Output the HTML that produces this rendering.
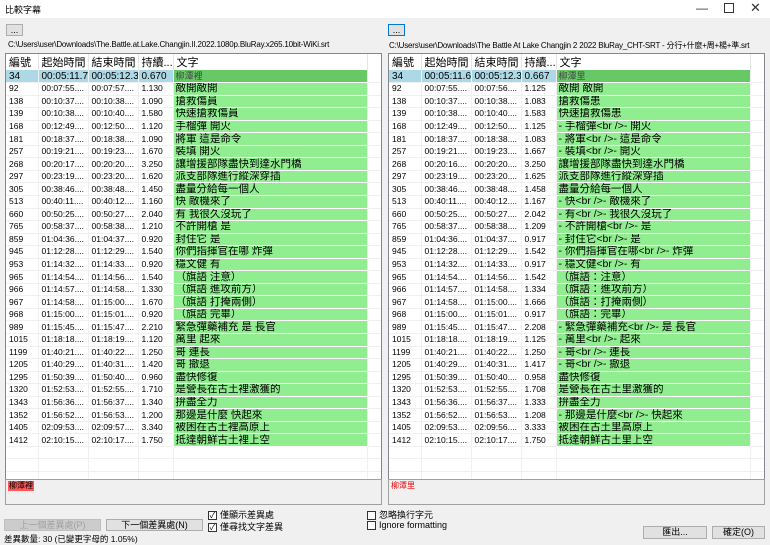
<!DOCTYPE html>
<html><head><meta charset="utf-8"><style>
*{margin:0;padding:0;box-sizing:border-box}
body{width:770px;height:544px;background:#f0f0f0;font-family:"Liberation Sans","Noto Sans CJK TC",sans-serif;font-size:9px;color:#000;position:relative;overflow:hidden}
.a{position:absolute}
.title{left:0;top:0;width:770px;height:18px;background:#fff}
.btn{background:#e1e1e1;border:1px solid #adadad;text-align:center;font-size:9px;line-height:10px}
.list{background:#fff;border:1px solid #828790;overflow:hidden}
table{border-collapse:collapse;table-layout:fixed}
td{height:12.55px;border-right:1px solid #f0f0f0;border-bottom:1px solid #f0f0f0;white-space:nowrap;overflow:hidden;padding-left:3px;font-size:8.5px;line-height:11px}
td.t{background:#90ee90;font-size:10.5px;padding-left:2px;border-bottom:1px solid #fff}
tr.sel td{background:#add8e6;font-size:10px}
tr.sel td.t{background:#66c966;color:#444;font-size:9px}
tr.sel td.g{background:#fff}
th{height:14px;font-weight:normal;text-align:left;padding-left:3px;font-size:11px;border-right:1px solid #e5e5e5;white-space:nowrap;overflow:hidden}
.tb{background:#f0f0f0;border:1px solid #a0a0a0}
.cb{width:9px;height:9px;border:1px solid #333;background:#fff;display:inline-block;vertical-align:middle;margin-right:3px;font-size:8px;line-height:7px;text-align:center}
</style></head><body>
<div class="a title"></div>
<div class="a" style="left:5px;top:3px;font-size:9px">比較字幕</div>
<div class="a" style="left:696px;top:1px;font-size:12px;color:#333">—</div>
<div class="a" style="left:724px;top:3px;width:10px;height:10px;border:1px solid #333"></div>
<div class="a" style="left:750px;top:0px;font-size:13px;color:#333">✕</div>

<div class="a btn" style="left:6px;top:24px;width:17px;height:12px">...</div>
<div class="a btn" style="left:388px;top:24px;width:17px;height:12px;border-color:#0078d7">...</div>
<div class="a" style="left:8px;top:40px;font-size:8px;letter-spacing:-0.2px">C:\Users\user\Downloads\The.Battle.at.Lake.Changjin.II.2022.1080p.BluRay.x265.10bit-WiKi.srt</div>
<div class="a" style="left:389px;top:40px;font-size:8px;letter-spacing:-0.2px">C:\Users\user\Downloads\The Battle At Lake Changjin 2 2022 BluRay_CHT-SRT - 分行+什麼+周+楊+準.srt</div>

<div class="a list" style="left:5px;top:53px;width:377px;height:427px">
<table style="width:376px"><colgroup><col style="width:32px"><col style="width:50px"><col style="width:50px"><col style="width:35px"><col style="width:194px"><col></colgroup>
<tr><th>編號</th><th>起始時間</th><th>結束時間</th><th>持續...</th><th>文字</th><th></th></tr>
<tr class="sel"><td>34</td><td>00:05:11.70</td><td>00:05:12.37</td><td>0.670</td><td class="t">柳潭裡</td><td class="g"></td></tr>
<tr><td>92</td><td>00:07:55....</td><td>00:07:57....</td><td>1.130</td><td class="t">敵開敵開</td><td></td></tr>
<tr><td>138</td><td>00:10:37....</td><td>00:10:38....</td><td>1.090</td><td class="t">搶救傷員</td><td></td></tr>
<tr><td>139</td><td>00:10:38....</td><td>00:10:40....</td><td>1.580</td><td class="t">快速搶救傷員</td><td></td></tr>
<tr><td>168</td><td>00:12:49....</td><td>00:12:50....</td><td>1.120</td><td class="t">手榴彈 開火</td><td></td></tr>
<tr><td>181</td><td>00:18:37....</td><td>00:18:38....</td><td>1.090</td><td class="t">將軍 這是命令</td><td></td></tr>
<tr><td>257</td><td>00:19:21....</td><td>00:19:23....</td><td>1.670</td><td class="t">裝填 開火</td><td></td></tr>
<tr><td>268</td><td>00:20:17....</td><td>00:20:20....</td><td>3.250</td><td class="t">讓增援部隊盡快到達水門橋</td><td></td></tr>
<tr><td>297</td><td>00:23:19....</td><td>00:23:20....</td><td>1.620</td><td class="t">派支部隊進行縱深穿插</td><td></td></tr>
<tr><td>305</td><td>00:38:46....</td><td>00:38:48....</td><td>1.450</td><td class="t">盡量分給每一個人</td><td></td></tr>
<tr><td>513</td><td>00:40:11....</td><td>00:40:12....</td><td>1.160</td><td class="t">快 敵機來了</td><td></td></tr>
<tr><td>660</td><td>00:50:25....</td><td>00:50:27....</td><td>2.040</td><td class="t">有 我很久沒玩了</td><td></td></tr>
<tr><td>765</td><td>00:58:37....</td><td>00:58:38....</td><td>1.210</td><td class="t">不許開槍 是</td><td></td></tr>
<tr><td>859</td><td>01:04:36....</td><td>01:04:37....</td><td>0.920</td><td class="t">封住它 是</td><td></td></tr>
<tr><td>945</td><td>01:12:28....</td><td>01:12:29....</td><td>1.540</td><td class="t">你們指揮官在哪 炸彈</td><td></td></tr>
<tr><td>953</td><td>01:14:32....</td><td>01:14:33....</td><td>0.920</td><td class="t">穩文健 有</td><td></td></tr>
<tr><td>965</td><td>01:14:54....</td><td>01:14:56....</td><td>1.540</td><td class="t">（旗語 注意）</td><td></td></tr>
<tr><td>966</td><td>01:14:57....</td><td>01:14:58....</td><td>1.330</td><td class="t">（旗語 進攻前方）</td><td></td></tr>
<tr><td>967</td><td>01:14:58....</td><td>01:15:00....</td><td>1.670</td><td class="t">（旗語 打掩兩側）</td><td></td></tr>
<tr><td>968</td><td>01:15:00....</td><td>01:15:01....</td><td>0.920</td><td class="t">（旗語 完畢）</td><td></td></tr>
<tr><td>989</td><td>01:15:45....</td><td>01:15:47....</td><td>2.210</td><td class="t">緊急彈藥補充 是 長官</td><td></td></tr>
<tr><td>1015</td><td>01:18:18....</td><td>01:18:19....</td><td>1.120</td><td class="t">萬里 起來</td><td></td></tr>
<tr><td>1199</td><td>01:40:21....</td><td>01:40:22....</td><td>1.250</td><td class="t">哥 連長</td><td></td></tr>
<tr><td>1205</td><td>01:40:29....</td><td>01:40:31....</td><td>1.420</td><td class="t">哥 撤退</td><td></td></tr>
<tr><td>1295</td><td>01:50:39....</td><td>01:50:40....</td><td>0.960</td><td class="t">盡快修復</td><td></td></tr>
<tr><td>1320</td><td>01:52:53....</td><td>01:52:55....</td><td>1.710</td><td class="t">是營長在古土裡激獲的</td><td></td></tr>
<tr><td>1343</td><td>01:56:36....</td><td>01:56:37....</td><td>1.340</td><td class="t">拚盡全力</td><td></td></tr>
<tr><td>1352</td><td>01:56:52....</td><td>01:56:53....</td><td>1.200</td><td class="t">那邊是什麼 快起來</td><td></td></tr>
<tr><td>1405</td><td>02:09:53....</td><td>02:09:57....</td><td>3.340</td><td class="t">被困在古土裡高原上</td><td></td></tr>
<tr><td>1412</td><td>02:10:15....</td><td>02:10:17....</td><td>1.750</td><td class="t">抵達朝鮮古土裡上空</td><td></td></tr>
<tr><td></td><td></td><td></td><td></td><td></td><td></td></tr>
<tr><td></td><td></td><td></td><td></td><td></td><td></td></tr>
<tr><td></td><td></td><td></td><td></td><td></td><td></td></tr>
</table></div>

<div class="a list" style="left:388px;top:53px;width:377px;height:427px">
<table style="width:376px"><colgroup><col style="width:32px"><col style="width:50px"><col style="width:50px"><col style="width:35px"><col style="width:194px"><col></colgroup>
<tr><th>編號</th><th>起始時間</th><th>結束時間</th><th>持續...</th><th>文字</th><th></th></tr>
<tr class="sel"><td>34</td><td>00:05:11.65</td><td>00:05:12.32</td><td>0.667</td><td class="t">柳潭里</td><td class="g"></td></tr>
<tr><td>92</td><td>00:07:55....</td><td>00:07:56....</td><td>1.125</td><td class="t">敵開 敵開</td><td></td></tr>
<tr><td>138</td><td>00:10:37....</td><td>00:10:38....</td><td>1.083</td><td class="t">搶救傷患</td><td></td></tr>
<tr><td>139</td><td>00:10:38....</td><td>00:10:40....</td><td>1.583</td><td class="t">快速搶救傷患</td><td></td></tr>
<tr><td>168</td><td>00:12:49....</td><td>00:12:50....</td><td>1.125</td><td class="t">- 手榴彈&lt;br /&gt;- 開火</td><td></td></tr>
<tr><td>181</td><td>00:18:37....</td><td>00:18:38....</td><td>1.083</td><td class="t">- 將軍&lt;br /&gt;- 這是命令</td><td></td></tr>
<tr><td>257</td><td>00:19:21....</td><td>00:19:23....</td><td>1.667</td><td class="t">- 裝填&lt;br /&gt;- 開火</td><td></td></tr>
<tr><td>268</td><td>00:20:16....</td><td>00:20:20....</td><td>3.250</td><td class="t">讓增援部隊盡快到達水門橋</td><td></td></tr>
<tr><td>297</td><td>00:23:19....</td><td>00:23:20....</td><td>1.625</td><td class="t">派支部隊進行縱深穿插</td><td></td></tr>
<tr><td>305</td><td>00:38:46....</td><td>00:38:48....</td><td>1.458</td><td class="t">盡量分給每一個人</td><td></td></tr>
<tr><td>513</td><td>00:40:11....</td><td>00:40:12....</td><td>1.167</td><td class="t">- 快&lt;br /&gt;- 敵機來了</td><td></td></tr>
<tr><td>660</td><td>00:50:25....</td><td>00:50:27....</td><td>2.042</td><td class="t">- 有&lt;br /&gt;- 我很久沒玩了</td><td></td></tr>
<tr><td>765</td><td>00:58:37....</td><td>00:58:38....</td><td>1.209</td><td class="t">- 不許開槍&lt;br /&gt;- 是</td><td></td></tr>
<tr><td>859</td><td>01:04:36....</td><td>01:04:37....</td><td>0.917</td><td class="t">- 封住它&lt;br /&gt;- 是</td><td></td></tr>
<tr><td>945</td><td>01:12:28....</td><td>01:12:29....</td><td>1.542</td><td class="t">- 你們指揮官在哪&lt;br /&gt;- 炸彈</td><td></td></tr>
<tr><td>953</td><td>01:14:32....</td><td>01:14:33....</td><td>0.917</td><td class="t">- 穩文健&lt;br /&gt;- 有</td><td></td></tr>
<tr><td>965</td><td>01:14:54....</td><td>01:14:56....</td><td>1.542</td><td class="t">（旗語：注意）</td><td></td></tr>
<tr><td>966</td><td>01:14:57....</td><td>01:14:58....</td><td>1.334</td><td class="t">（旗語：進攻前方）</td><td></td></tr>
<tr><td>967</td><td>01:14:58....</td><td>01:15:00....</td><td>1.666</td><td class="t">（旗語：打掩兩側）</td><td></td></tr>
<tr><td>968</td><td>01:15:00....</td><td>01:15:01....</td><td>0.917</td><td class="t">（旗語：完畢）</td><td></td></tr>
<tr><td>989</td><td>01:15:45....</td><td>01:15:47....</td><td>2.208</td><td class="t">- 緊急彈藥補充&lt;br /&gt;- 是 長官</td><td></td></tr>
<tr><td>1015</td><td>01:18:18....</td><td>01:18:19....</td><td>1.125</td><td class="t">- 萬里&lt;br /&gt;- 起來</td><td></td></tr>
<tr><td>1199</td><td>01:40:21....</td><td>01:40:22....</td><td>1.250</td><td class="t">- 哥&lt;br /&gt;- 連長</td><td></td></tr>
<tr><td>1205</td><td>01:40:29....</td><td>01:40:31....</td><td>1.417</td><td class="t">- 哥&lt;br /&gt;- 撤退</td><td></td></tr>
<tr><td>1295</td><td>01:50:39....</td><td>01:50:40....</td><td>0.958</td><td class="t">盡快修復</td><td></td></tr>
<tr><td>1320</td><td>01:52:53....</td><td>01:52:55....</td><td>1.708</td><td class="t">是營長在古土里激獲的</td><td></td></tr>
<tr><td>1343</td><td>01:56:36....</td><td>01:56:37....</td><td>1.333</td><td class="t">拚盡全力</td><td></td></tr>
<tr><td>1352</td><td>01:56:52....</td><td>01:56:53....</td><td>1.208</td><td class="t">- 那邊是什麼&lt;br /&gt;- 快起來</td><td></td></tr>
<tr><td>1405</td><td>02:09:53....</td><td>02:09:56....</td><td>3.333</td><td class="t">被困在古土里高原上</td><td></td></tr>
<tr><td>1412</td><td>02:10:15....</td><td>02:10:17....</td><td>1.750</td><td class="t">抵達朝鮮古土里上空</td><td></td></tr>
<tr><td></td><td></td><td></td><td></td><td></td><td></td></tr>
<tr><td></td><td></td><td></td><td></td><td></td><td></td></tr>
<tr><td></td><td></td><td></td><td></td><td></td><td></td></tr>
</table></div>

<div class="a tb" style="left:5px;top:479px;width:377px;height:26px"><span class="a" style="left:2px;top:1px;background:#f55;font-size:8px;line-height:10px;padding:0 1px">柳潭裡</span></div>
<div class="a tb" style="left:388px;top:479px;width:377px;height:26px"><span class="a" style="left:2px;top:1px;color:#e00;font-size:8px;line-height:10px">柳潭里</span></div>

<div class="a" style="left:208px;top:508px;font-size:9px"><span class="cb">✓</span>僅顯示差異處</div>
<div class="a" style="left:208px;top:520px;font-size:9px"><span class="cb">✓</span>僅尋找文字差異</div>
<div class="a" style="left:367px;top:508px;font-size:9px"><span class="cb"></span>忽略換行字元</div>
<div class="a" style="left:367px;top:520px;font-size:9px"><span class="cb"></span>Ignore formatting</div>

<div class="a btn" style="left:4px;top:519px;width:97px;height:12px;color:#a0a0a0;background:#ccc;border-color:#bfbfbf">上一個差異處(P)</div>
<div class="a btn" style="left:106px;top:519px;width:97px;height:12px">下一個差異處(N)</div>
<div class="a btn" style="left:643px;top:526px;width:64px;height:13px;line-height:11px">匯出...</div>
<div class="a btn" style="left:712px;top:526px;width:53px;height:13px;line-height:11px">確定(O)</div>
<div class="a" style="left:4px;top:533px;font-size:8.5px">差異數量: 30 (已變更字母的 1.05%)</div>
</body></html>
